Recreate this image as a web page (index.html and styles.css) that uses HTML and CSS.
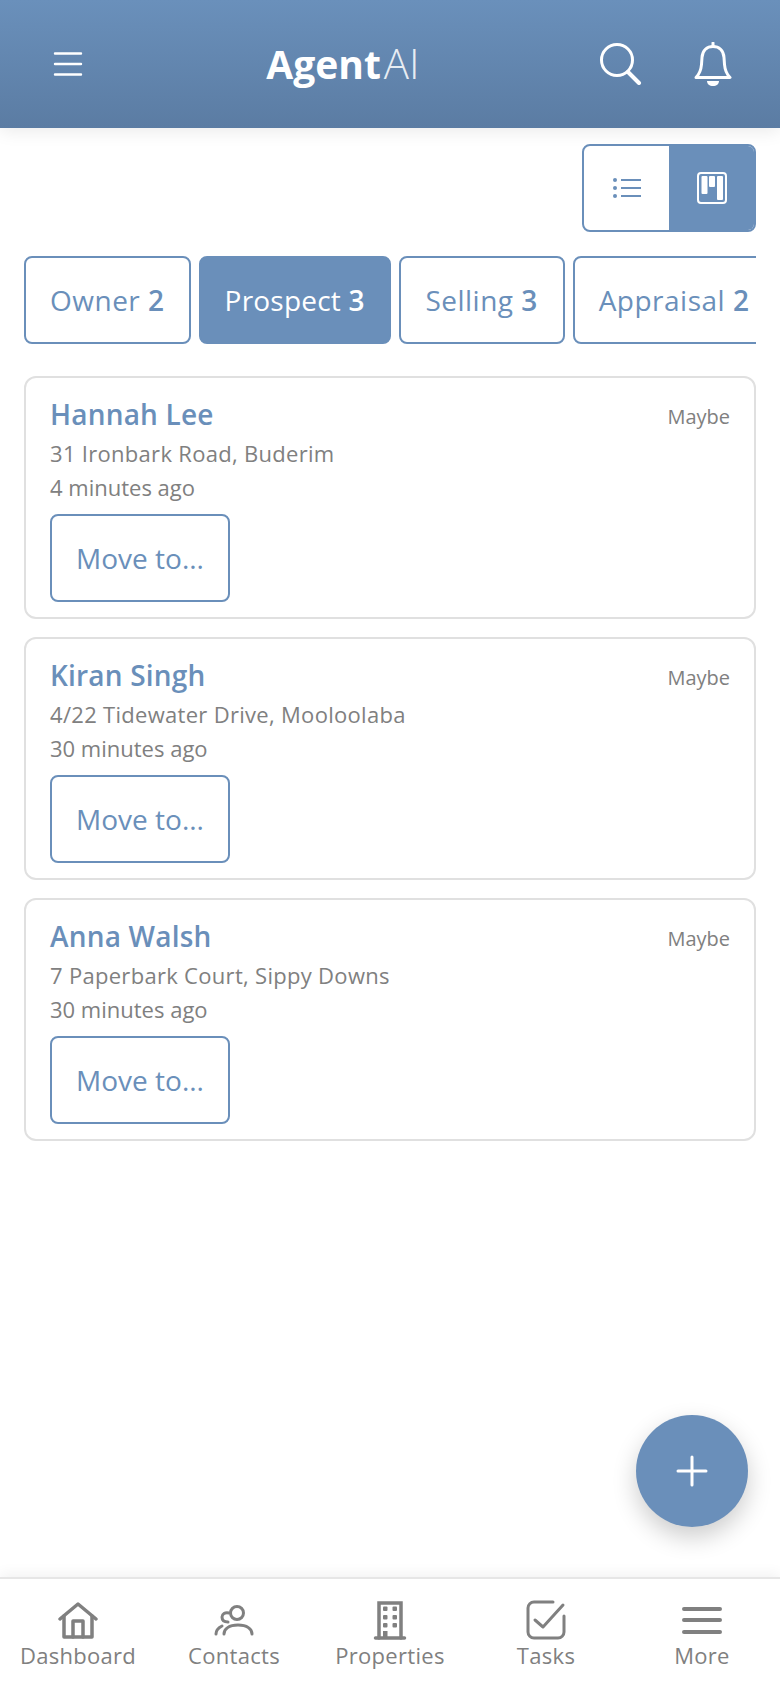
FILE: index.html
```html
<!DOCTYPE html>
<html>
<head>
	<meta charset="utf-8"/>
	<title>Agent AI</title>
	<link rel="stylesheet" href="styles.css">
</head>
<body>
<div class="app">
	<header class="topbar">
		<button class="icon_btn menu_btn">
			<svg width="32" height="26" viewBox="0 0 32 26" fill="none" stroke="#fff" stroke-width="2.4" stroke-linecap="round"><path d="M3 2.500h26M3 13h26M3 23.500h26"/></svg>
		</button>
		<div class="brand"><b>Agent</b><span>AI</span></div>
		<div class="top_actions">
			<svg width="42" height="42" viewBox="0 0 42 42" fill="none" stroke="#fff" stroke-width="3" stroke-linecap="round"><circle cx="17" cy="17" r="15.500"/><path d="M28 29l11 11" stroke-width="4"/></svg>
			<svg width="38" height="45" viewBox="0 0 38 45" fill="none" stroke="#fff" stroke-width="3" stroke-linejoin="round"><path d="M2 35.500c3-3 5-7 5.500-13l.5-7c.5-7 5-11 11-11s10.500 4 11 11l.5 7c.5 6 2.500 10 5.500 13z"/><path d="M19 1v3" stroke-linecap="round"/><path d="M13 39h12c0 3-2.500 5-6 5s-6-2-6-5z" fill="#fff" stroke="none"/></svg>
		</div>
	</header>

	<main class="content">
		<div class="toggle_row">
			<div class="view_toggle">
				<button class="toggle_opt">
					<svg width="28" height="20" viewBox="0 0 28 20" fill="#6a8fba"><circle cx="2" cy="2" r="2"/><circle cx="2" cy="10" r="2"/><circle cx="2" cy="18" r="2"/><rect x="8" y="1" width="20" height="2"/><rect x="8" y="9" width="20" height="2"/><rect x="8" y="17" width="20" height="2"/></svg>
				</button>
				<button class="toggle_opt on">
					<svg width="30" height="32" viewBox="0 0 30 32"><rect x="1" y="1" width="28" height="30" rx="3" fill="none" stroke="#fff" stroke-width="2"/><rect x="4.500" y="4" width="6" height="18" rx="1" fill="#fff"/><rect x="12" y="4" width="6" height="11" rx="1" fill="#fff"/><rect x="20" y="4" width="6" height="24" rx="1" fill="#fff"/></svg>
				</button>
			</div>
		</div>

		<div class="tabs">
			<a class="tab">Owner <b>2</b></a>
			<a class="tab on">Prospect <b>3</b></a>
			<a class="tab">Selling <b>3</b></a>
			<a class="tab">Appraisal <b>2</b></a>
		</div>

		<div class="card">
			<div class="card_head"><span class="name">Hannah Lee</span><span class="status">Maybe</span></div>
			<div class="addr">31 Ironbark Road, Buderim</div>
			<div class="when">4 minutes ago</div>
			<button class="move_btn">Move to...</button>
		</div>
		<div class="card">
			<div class="card_head"><span class="name">Kiran Singh</span><span class="status">Maybe</span></div>
			<div class="addr">4/22 Tidewater Drive, Mooloolaba</div>
			<div class="when">30 minutes ago</div>
			<button class="move_btn">Move to...</button>
		</div>
		<div class="card">
			<div class="card_head"><span class="name">Anna Walsh</span><span class="status">Maybe</span></div>
			<div class="addr">7 Paperbark Court, Sippy Downs</div>
			<div class="when">30 minutes ago</div>
			<button class="move_btn">Move to...</button>
		</div>

		<button class="fab">
			<svg width="32" height="32" viewBox="0 0 32 32" stroke="#fff" stroke-width="3" stroke-linecap="round"><path d="M16 2v28M2 16h28"/></svg>
		</button>
	</main>

	<nav class="bottom_nav">
		<a class="nav_item">
			<svg width="40" height="40" viewBox="0 0 40 40" fill="none" stroke="#808080" stroke-width="3.500" stroke-linecap="round" stroke-linejoin="round"><path d="M2 19L20 4l18 15"/><path d="M6 16v21h28V16"/><path d="M15 37V21h10v16"/></svg>
			<span>Dashboard</span>
		</a>
		<a class="nav_item">
			<svg width="40" height="40" viewBox="0 0 40 40" fill="none" stroke="#808080" stroke-width="3" stroke-linecap="round"><circle cx="23" cy="13" r="6.500"/><path d="M10 34c0-5 5-9 14-9s14 4 14 9"/><path d="M15 13c-4-1-7 1-7 4s2 5 6 5"/><path d="M2 34c0-4 2-6 6-8"/></svg>
			<span>Contacts</span>
		</a>
		<a class="nav_item">
			<svg width="40" height="40" viewBox="0 0 40 40" fill="none" stroke="#808080" stroke-width="3.500" stroke-linecap="round"><path d="M9 38V3h22v35"/><path d="M5.500 38h29"/><g fill="#808080" stroke="none"><rect x="13" y="6.500" width="4.500" height="4.500" rx="1"/><rect x="22.500" y="6.500" width="4.500" height="4.500" rx="1"/><rect x="13" y="15" width="4.500" height="4.500" rx="1"/><rect x="22.500" y="15" width="4.500" height="4.500" rx="1"/><rect x="13" y="23" width="4.500" height="4.500" rx="1"/><rect x="22.500" y="23" width="4.500" height="4.500" rx="1"/><rect x="13" y="31" width="4.500" height="7"/></g></svg>
			<span>Properties</span>
		</a>
		<a class="nav_item">
			<svg width="40" height="40" viewBox="0 0 40 40" fill="none" stroke="#808080" stroke-width="3" stroke-linecap="round" stroke-linejoin="round"><path d="M27 2H8a6 6 0 0 0-6 6v24a6 6 0 0 0 6 6h24a6 6 0 0 0 6-6V16"/><path d="M9 20l8 7L37 5"/></svg>
			<span>Tasks</span>
		</a>
		<a class="nav_item">
			<svg width="40" height="40" viewBox="0 0 40 40" stroke="#808080" stroke-width="4" stroke-linecap="round"><path d="M2 9h36M2 20h36M2 32h36"/></svg>
			<span>More</span>
		</a>
	</nav>
</div>
</body>
</html>
```

FILE: styles.css
```css
/* =====reset===== */
body, div, span, h1, p, a, b, button { padding: 0; margin: 0; }
button { background: none; border: 0; font-family: inherit; }

/* =====public===== */
body { background: #fff; color: #808080; font-family: "Open Sans", "Liberation Sans", sans-serif; overflow: hidden; }
.app { display: flex; flex-direction: column; height: 1688px; }

/* =====top bar===== */
.topbar { display: flex; align-items: center; justify-content: space-between; flex: none; height: 128px; padding: 0 48px 0 52px; background: linear-gradient(#6a90bb, #5b7ca3); box-shadow: 0 4px 16px rgba(0,0,0,0.08); position: relative; z-index: 1; box-sizing: border-box; }
.icon_btn { display: flex; }
.brand { display: flex; align-items: baseline; gap: 3px; margin-left: 2px; padding-bottom: 4px; color: #fff; font-size: 39px; }
.brand b { font-weight: 700; }
.brand span { font-size: 42px; font-weight: 300; opacity: .85; }
.top_actions { display: flex; align-items: center; gap: 52px; }

/* =====content===== */
.content { position: relative; flex: 1; padding: 16px 24px 0; box-sizing: border-box; }
.toggle_row { display: flex; justify-content: flex-end; }
.view_toggle { display: flex; width: 174px; height: 88px; border: 2px solid #6a8fba; border-radius: 8px; overflow: hidden; box-sizing: border-box; }
.toggle_opt { display: flex; align-items: center; justify-content: center; flex: 1; }
.toggle_opt.on { background: #6a8fba; }

.tabs { display: flex; gap: 8px; margin-top: 24px; overflow: hidden; }
.tab { display: flex; align-items: center; justify-content: center; flex: none; min-width: 166px; height: 88px; padding: 0 24px; border: 2px solid #6a8fba; border-radius: 8px; color: #6a8fba; font-size: 28px; letter-spacing: .5px; box-sizing: border-box; white-space: pre; }
.tab b { font-weight: 600; }
.tab.on { background: #6a8fba; color: #fff; letter-spacing: .2px; }

.card { margin-top: 18px; padding: 17px 24px 15px; border: 2px solid #e0e0e0; border-radius: 12px; box-sizing: border-box; }
.tabs + .card { margin-top: 32px; }
.card_head { display: flex; justify-content: space-between; align-items: center; }
.name { color: #6a8fba; font-size: 28px; font-weight: 600; line-height: 38px; letter-spacing: .2px; }
.status { padding-top: 4px; font-size: 20px; }
.addr { margin-top: 5px; font-size: 22px; line-height: 31px; letter-spacing: .3px; }
.when { margin-top: 3px; font-size: 22px; line-height: 31px; }
.move_btn { display: block; width: 180px; height: 88px; margin-top: 11px; border: 2px solid #6a8fba; border-radius: 8px; color: #6a8fba; font-size: 28px; }

.fab { display: flex; align-items: center; justify-content: center; position: absolute; right: 32px; bottom: 50px; width: 112px; height: 112px; border-radius: 50%; background: #6a8fba; box-shadow: 0 10px 24px rgba(0,0,0,0.2); }

/* =====bottom nav===== */
.bottom_nav { display: flex; flex: none; height: 111px; padding-top: 21px; border-top: 2px solid #e6e6e6; box-shadow: 0 -4px 12px rgba(0,0,0,0.05); box-sizing: border-box; position: relative; }
.nav_item { display: flex; flex-direction: column; align-items: center; flex: 1; font-size: 22px; line-height: 30px; letter-spacing: .3px; }
```
